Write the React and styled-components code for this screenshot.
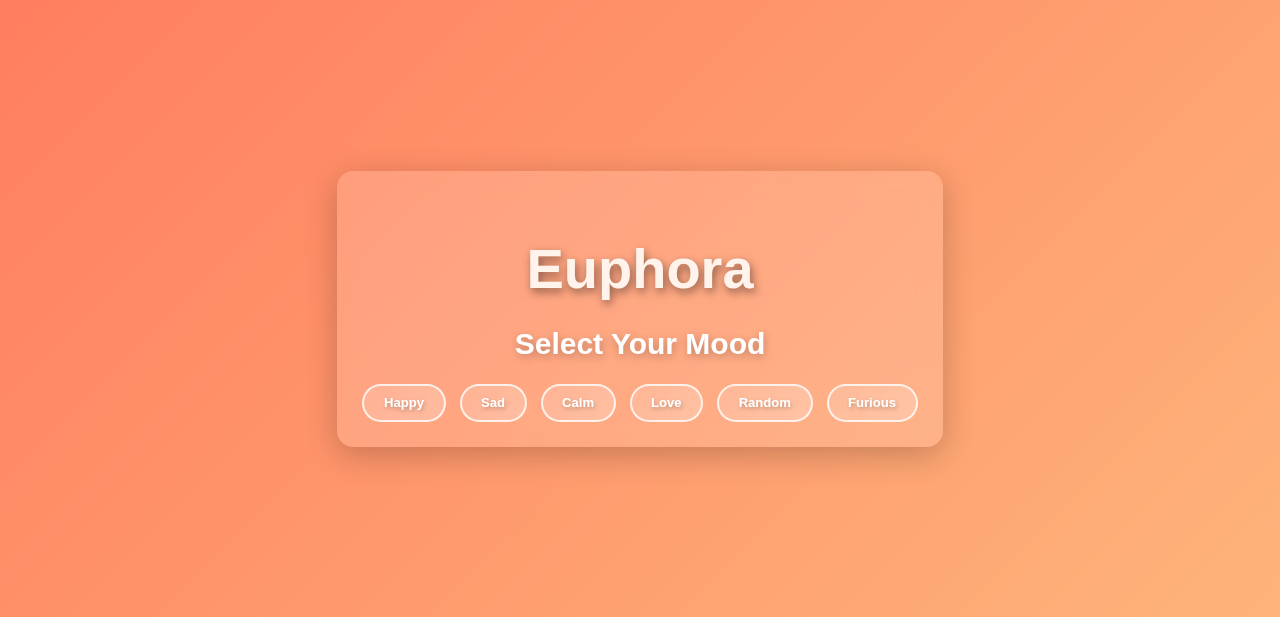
import styled, { createGlobalStyle } from "styled-components";

const moods = ["Happy", "Sad", "Calm", "Love", "Random", "Furious"];

const GlobalStyle = createGlobalStyle`
  html, body {
    margin: 0;
    padding: 0;
  }
  body {
    font-family: "Liberation Sans", Arial, sans-serif;
    background: linear-gradient(135deg, #ff7e5f, #feb47b);
    min-height: 100vh;
  }
`;

export default function App() {
  return (
    <>
      <GlobalStyle />
      <StyledPage>
        <StyledCard>
          <StyledTitle>Euphora</StyledTitle>
          <StyledSubtitle>Select Your Mood</StyledSubtitle>
          <StyledRow>
            {moods.map((m) => (
              <StyledMoodButton key={m}>{m}</StyledMoodButton>
            ))}
          </StyledRow>
        </StyledCard>
      </StyledPage>
    </>
  );
}

const StyledPage = styled.div`
  min-height: 100vh;
  display: flex;
  align-items: center;
  justify-content: center;
`;
const StyledCard = styled.div`
  display: flex;
  flex-direction: column;
  align-items: center;
  padding: 65px 25px 25px;
  border-radius: 16px;
  background: rgba(255, 255, 255, 0.15);
  box-shadow: 0 8px 32px rgba(0, 0, 0, 0.22);
  backdrop-filter: blur(10px);
`;
const StyledTitle = styled.h1`
  margin: 0 0 26px;
  font-size: 56px;
  font-weight: 700;
  color: #fff3ec;
  text-shadow: 2px 4px 10px rgba(0, 0, 0, 0.45);
`;
const StyledSubtitle = styled.h2`
  margin: 0 0 23px;
  font-size: 30px;
  font-weight: 700;
  color: #fff;
  text-shadow: 1px 3px 8px rgba(0, 0, 0, 0.25);
`;
const StyledRow = styled.div`
  display: flex;
  gap: 14px;
`;
const StyledMoodButton = styled.button`
  padding: 10px 19.5px;
  border: 2px solid rgba(255, 255, 255, 0.8);
  border-radius: 25px;
  background: linear-gradient(135deg, rgba(255, 255, 255, 0.14), rgba(255, 255, 255, 0.26));
  color: #fff;
  font-family: "Liberation Sans", Arial, sans-serif;
  font-size: 13.1px;
  font-weight: 700;
  line-height: 14px;
  text-shadow: 1px 2px 4px rgba(0, 0, 0, 0.25);
  cursor: pointer;
`;
